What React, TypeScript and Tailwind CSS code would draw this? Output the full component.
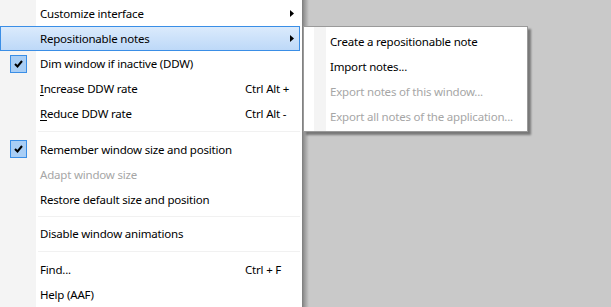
import React from "react";

type Item =
  | { kind: "sep"; h: number }
  | {
      kind: "item";
      label: React.ReactNode;
      shortcut?: string;
      arrow?: boolean;
      checked?: boolean;
      disabled?: boolean;
      active?: boolean;
    };

const items: Item[] = [
  { kind: "item", label: "Customize interface", arrow: true },
  { kind: "item", label: "Repositionable notes", arrow: true, active: true },
  { kind: "item", label: "Dim window if inactive (DDW)", checked: true },
  {
    kind: "item",
    label: (
      <>
        <span className="underline underline-offset-2">I</span>ncrease DDW rate
      </>
    ),
    shortcut: "Ctrl Alt +",
  },
  {
    kind: "item",
    label: (
      <>
        <span className="underline underline-offset-2">R</span>educe DDW rate
      </>
    ),
    shortcut: "Ctrl Alt -",
  },
  { kind: "sep", h: 11 },
  { kind: "item", label: "Remember window size and position", checked: true },
  { kind: "item", label: "Adapt window size", disabled: true },
  { kind: "item", label: "Restore default size and position" },
  { kind: "sep", h: 10 },
  { kind: "item", label: "Disable window animations" },
  { kind: "sep", h: 11 },
  { kind: "item", label: "Find...", shortcut: "Ctrl + F" },
  { kind: "item", label: "Help (AAF)" },
];

function Check() {
  return (
    <div className="w-[17px] h-[18px] bg-[#a9cef5] border border-[#3a8ee6] flex items-center justify-center">
      <svg width="9" height="8" viewBox="0 0 9 8">
        <path d="M1 4 L3.5 6.5 L8 1" stroke="#000" strokeWidth="2" fill="none" />
      </svg>
    </div>
  );
}

function Arrow() {
  return (
    <svg width="4" height="7" viewBox="0 0 4 7">
      <path d="M0 0 L4 3.5 L0 7 Z" fill="#000" />
    </svg>
  );
}

export default function App() {
  return (
    <div
      className="relative w-[611px] h-[307px] overflow-hidden bg-[#c9c9c9] flex text-[11.5px] tracking-[-0.2px] text-black"
      style={{ fontFamily: '"Segoe UI", "Noto Sans", sans-serif' }}
    >
      <div className="w-[302px] h-full flex flex-col pt-[1px] bg-[linear-gradient(to_right,#f4f4f4_0,#f4f4f4_36px,#ffffff_36px)]">
        {items.map((it, i) =>
          it.kind === "sep" ? (
            <div key={i} className="flex items-center pl-[38px] pr-[2px]" style={{ height: it.h }}>
              <div className="h-px w-full bg-[#f1f1f1]" />
            </div>
          ) : (
            <div
              key={i}
              className={
                "flex items-center h-[25px] w-[300px] shrink-0 " +
                (it.active
                  ? "bg-[linear-gradient(to_bottom,#dcebfc,#bcd8f8)] shadow-[inset_0_0_0_1px_#3a8ee6]"
                  : "")
              }
            >
              <div className="w-[40px] pl-[10px] flex items-center">{it.checked ? <Check /> : null}</div>
              <div className={"w-[205px] whitespace-nowrap " + (it.disabled ? "text-[#a6a6a6]" : "")}>
                {it.label}
              </div>
              <div className="w-[45px] whitespace-nowrap">{it.shortcut}</div>
              <div className="w-[10px] flex items-center">{it.arrow ? <Arrow /> : null}</div>
            </div>
          )
        )}
      </div>
      <div className="w-[7px] h-full bg-[linear-gradient(to_right,#7c7c7c,#9a9a9a_35%,#c9c9c9)]" />

      <div className="absolute left-[303px] top-[26px] w-[225px] h-[106px] border border-[#9a9a9a] pt-[2px] shadow-[3px_3px_2px_rgba(0,0,0,0.4)] bg-[linear-gradient(to_right,#ffffff_0,#ffffff_10px,#f4f4f4_10px,#f4f4f4_22px,#ffffff_22px)]">
        {[
          { l: "Create a repositionable note" },
          { l: "Import notes..." },
          { l: "Export notes of this window...", d: true },
          { l: "Export all notes of the application...", d: true },
        ].map((r, i) => (
          <div
            key={i}
            className={"h-[25px] flex items-center pl-[26px] whitespace-nowrap " + (r.d ? "text-[#a6a6a6]" : "")}
          >
            {r.l}
          </div>
        ))}
      </div>
    </div>
  );
}
